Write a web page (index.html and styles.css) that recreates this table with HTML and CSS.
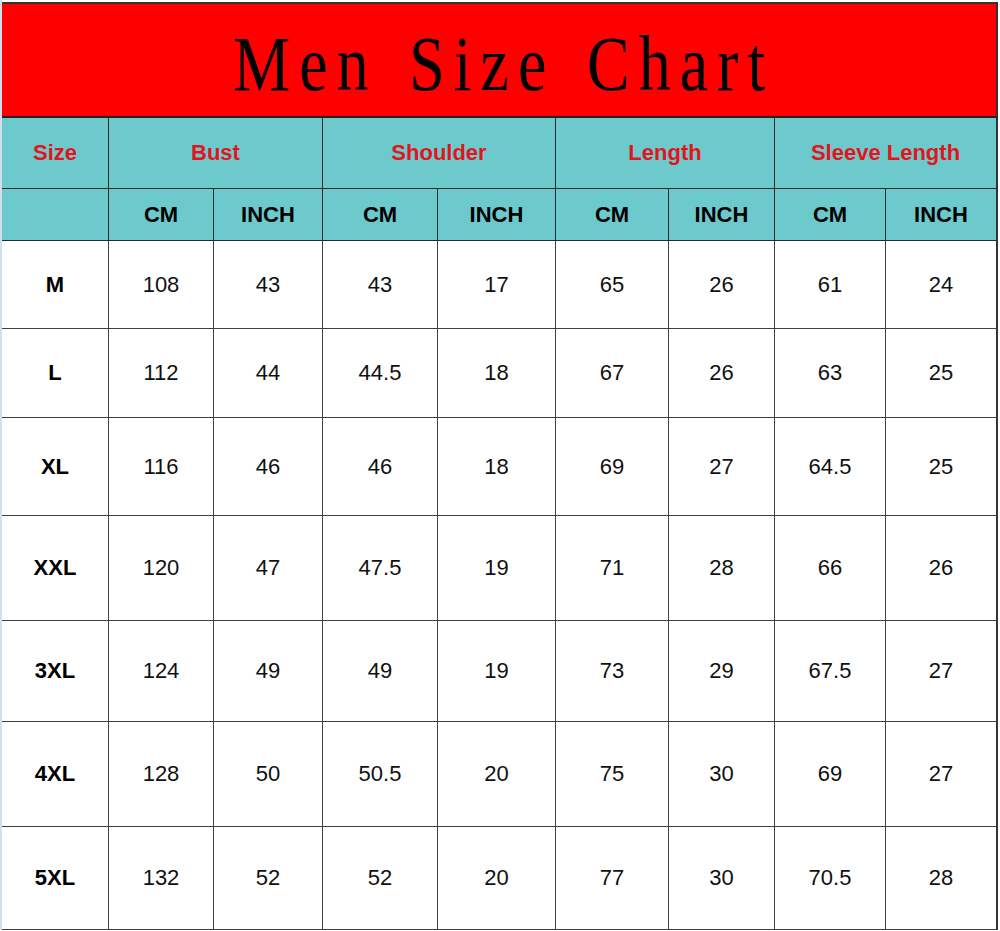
FILE: index.html
```html
<!DOCTYPE html>
<html lang="en">
<head>
<meta charset="utf-8">
<title>Men Size Chart</title>
<link rel="stylesheet" href="styles.css">
</head>
<body>
<div class="chart">
  <div class="cell title"><span class="title-text">Men Size Chart</span></div>

  <div class="cell head group">Size</div>
  <div class="cell head group span2">Bust</div>
  <div class="cell head group span2">Shoulder</div>
  <div class="cell head group span2">Length</div>
  <div class="cell head group span2 last">Sleeve Length</div>

  <div class="cell head unit"></div>
  <div class="cell head unit">CM</div>
  <div class="cell head unit">INCH</div>
  <div class="cell head unit">CM</div>
  <div class="cell head unit">INCH</div>
  <div class="cell head unit">CM</div>
  <div class="cell head unit">INCH</div>
  <div class="cell head unit">CM</div>
  <div class="cell head unit last">INCH</div>

  <div class="cell size">M</div><div class="cell">108</div><div class="cell">43</div><div class="cell">43</div><div class="cell">17</div><div class="cell">65</div><div class="cell">26</div><div class="cell">61</div><div class="cell last">24</div>
  <div class="cell size">L</div><div class="cell">112</div><div class="cell">44</div><div class="cell">44.5</div><div class="cell">18</div><div class="cell">67</div><div class="cell">26</div><div class="cell">63</div><div class="cell last">25</div>
  <div class="cell size">XL</div><div class="cell">116</div><div class="cell">46</div><div class="cell">46</div><div class="cell">18</div><div class="cell">69</div><div class="cell">27</div><div class="cell">64.5</div><div class="cell last">25</div>
  <div class="cell size">XXL</div><div class="cell">120</div><div class="cell">47</div><div class="cell">47.5</div><div class="cell">19</div><div class="cell">71</div><div class="cell">28</div><div class="cell">66</div><div class="cell last">26</div>
  <div class="cell size">3XL</div><div class="cell">124</div><div class="cell">49</div><div class="cell">49</div><div class="cell">19</div><div class="cell">73</div><div class="cell">29</div><div class="cell">67.5</div><div class="cell last">27</div>
  <div class="cell size">4XL</div><div class="cell">128</div><div class="cell">50</div><div class="cell">50.5</div><div class="cell">20</div><div class="cell">75</div><div class="cell">30</div><div class="cell">69</div><div class="cell last">27</div>
  <div class="cell size">5XL</div><div class="cell">132</div><div class="cell">52</div><div class="cell">52</div><div class="cell">20</div><div class="cell">77</div><div class="cell">30</div><div class="cell">70.5</div><div class="cell last">28</div>
</div>
</body>
</html>
```
FILE: styles.css
```css
html, body {
  margin: 0;
  padding: 0;
  background: #ffffff;
}

body {
  border-left: 2px solid #d3dfea;
  padding-top: 2px;
  font-family: "Liberation Sans", Arial, sans-serif;
  color: #111111;
}

.chart {
  display: grid;
  width: 996px;
  grid-template-columns: 107px 105px 109px 115px 118px 113px 106px 111px 112px;
  grid-template-rows: 114px 71px 52px 88px 89px 98px 105px 101px 105px 103px;
  border-top: 2px solid #333333;
}

.cell {
  box-sizing: border-box;
  display: flex;
  align-items: center;
  justify-content: center;
  border-right: 1px solid #404040;
  border-bottom: 1px solid #404040;
  font-size: 22px;
  line-height: 1;
  background: #ffffff;
}

.cell.last {
  border-right: 2px solid #333333;
}

.title {
  grid-column: 1 / -1;
  background: #ff0000;
  border-bottom: 2px solid #222222;
  border-right: 2px solid #333333;
  padding-top: 8px;
}

.title-text {
  display: inline-block;
  white-space: nowrap;
  font-family: "Liberation Serif", "Times New Roman", serif;
  font-size: 78px;
  font-weight: normal;
  color: #000000;
  letter-spacing: 11px;
  word-spacing: 8px;
  padding-left: 11px;
  transform: scaleX(0.82);
}

.head {
  background: #6ccacd;
  border-color: #2a2a2a;
  font-weight: bold;
}

.group {
  color: #e3141c;
}

.unit {
  color: #000000;
}

.span2 {
  grid-column: span 2;
}

.size {
  font-weight: bold;
  color: #000000;
}
```
